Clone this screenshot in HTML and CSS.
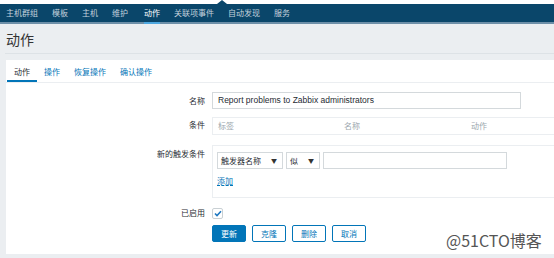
FILE: index.html
```html
<!DOCTYPE html>
<html>
<head>
<meta charset="utf-8">
<link rel="stylesheet" href="styles.css">
</head>
<body>
<div class="topstrip"><span class="notch"></span></div>
<nav class="nav">
  <a class="nav-item">主机群组</a>
  <a class="nav-item">模板</a>
  <a class="nav-item">主机</a>
  <a class="nav-item">维护</a>
  <a class="nav-item active">动作</a>
  <a class="nav-item">关联项事件</a>
  <a class="nav-item">自动发现</a>
  <a class="nav-item">服务</a>
</nav>
<header class="header"><h1 class="title">动作</h1></header>
<main class="panel">
  <div class="tabs">
    <span class="tab active">动作</span>
    <span class="tab">操作</span>
    <span class="tab">恢复操作</span>
    <span class="tab">确认操作</span>
  </div>
  <div class="form">
    <div class="row row-name">
      <label class="lbl">名称</label>
      <div class="field"><div class="input name-input">Report problems to Zabbix administrators</div></div>
    </div>
    <div class="row row-cond">
      <label class="lbl">条件</label>
      <div class="field">
        <div class="cond-box">
          <span class="th th1">标签</span>
          <span class="th th2">名称</span>
          <span class="th th3">动作</span>
        </div>
      </div>
    </div>
    <div class="row row-new">
      <label class="lbl">新的触发条件</label>
      <div class="field">
        <div class="new-box">
          <div class="controls">
            <div class="select sel1"><span>触发器名称</span><span class="arrow">▼</span></div>
            <div class="select sel2"><span>似</span><span class="arrow">▼</span></div>
            <div class="input val-input"></div>
          </div>
          <a class="add-link">添加</a>
        </div>
      </div>
    </div>
    <div class="row row-enabled">
      <label class="lbl">已启用</label>
      <div class="field">
        <span class="checkbox"><svg width="8" height="7" viewBox="0 0 8 7"><path d="M1 3.5 L3 5.5 L7 1.2" fill="none" stroke="#1f78c1" stroke-width="1.6"/></svg></span>
      </div>
    </div>
    <div class="row row-buttons">
      <span class="lbl"></span>
      <div class="field buttons">
        <button class="btn primary">更新</button>
        <button class="btn">克隆</button>
        <button class="btn">删除</button>
        <button class="btn">取消</button>
      </div>
    </div>
  </div>
  <div class="watermark">@51CTO博客</div>
</main>
</body>
</html>
```
FILE: styles.css
```css
* { box-sizing: border-box; }
html, body { margin: 0; padding: 0; }
body {
  width: 554px;
  height: 258px;
  overflow: hidden;
  background: #ebeef1;
  font-family: "Noto Sans CJK SC", "Liberation Sans", sans-serif;
  font-size: 8px;
  color: #1f2c33;
}
.topstrip {
  height: 4px;
  background: #ffffff;
  position: relative;
}
.notch {
  position: absolute;
  left: 217px;
  top: 0;
  width: 0; height: 0;
  border-left: 5px solid transparent;
  border-right: 5px solid transparent;
  border-bottom: 4px solid #0a466a;
}
.nav {
  height: 20px;
  background: #0a466a;
  border-bottom: 2px solid #6d8fa8;
  display: flex;
  align-items: center;
  padding-left: 6px;
}
.nav-item {
  color: #c3d1dc;
  font-size: 8px;
  line-height: 18px;
  height: 18px;
  margin-right: 14px;
  position: relative;
}
.nav-item.active {
  color: #ffffff;
  margin-left: 2px;
}
.nav-item.active::after {
  content: "";
  position: absolute;
  left: 0; right: 0; bottom: -2px;
  height: 2px;
  background: #4fa8e0;
}
.header {
  height: 30px;
  padding: 5px 0 0 1px;
  border-bottom: 1px solid #dde2e6;
  margin: 0 0 0 5px;
}
.title {
  margin: 0;
  font-size: 14px;
  font-weight: normal;
  color: #333333;
  line-height: 20px;
}
.panel {
  background: #ffffff;
  margin: 6px 0 0 6px;
  height: 194px;
  position: relative;
}
.tabs {
  display: flex;
  height: 23px;
  border-bottom: 1px solid #ebeef1;
  padding-left: 1px;
}
.tab {
  padding: 5px 7px 0 7px;
  color: #0275b8;
  font-size: 8px;
  line-height: 13px;
  position: relative;
}
.tab.active {
  color: #1f2c33;
  border-bottom: 2px solid #0275b8;
}
.form {
  padding-top: 9px;
}
.row {
  display: flex;
  align-items: flex-start;
}
.lbl {
  width: 206px;
  text-align: right;
  padding-right: 7px;
  font-size: 8px;
  color: #1f2c33;
  line-height: 17px;
  flex: none;
}
.field { flex: 1; }
.input {
  border: 1px solid #d4d9dc;
  background: #fff;
  height: 17px;
  font-size: 8.5px;
  line-height: 15px;
  padding-left: 5px;
  font-family: "Liberation Sans", "Noto Sans CJK SC", sans-serif;
  color: #1f2c33;
}
.name-input { width: 309px; }
.row-cond { margin-top: 8px; }
.cond-box {
  border: 1px solid #ebeef1;
  border-right: none;
  height: 18px;
  position: relative;
  color: #9ba7ae;
}
.th { position: absolute; top: 3px; line-height: 10px; }
.th1 { left: 5px; }
.th2 { left: 131px; }
.th3 { left: 258px; }
.row-cond .lbl { line-height: 15px; }
.row-new { margin-top: 10px; }
.row-new .lbl { line-height: 14px; padding-top: 2px; }
.new-box {
  border: 1px solid #ebeef1;
  border-right: none;
  height: 53px;
  padding: 6px 0 0 4px;
}
.controls { display: flex; gap: 3px; }
.select {
  border: 1px solid #d4d9dc;
  height: 17px;
  display: flex;
  justify-content: space-between;
  align-items: center;
  padding: 0 5px 0 3px;
  font-size: 8px;
  color: #1f2c33;
}
.arrow { font-size: 6px; color: #333; }
.sel1 { width: 66px; }
.sel2 { width: 34px; }
.val-input { width: 184px; }
.add-link {
  display: inline-block;
  margin-top: 6px;
  color: #0275b8;
  text-decoration: underline;
  text-decoration-style: dashed;
  font-size: 8px;
  line-height: 12px;
}
.row-enabled { margin-top: 9px; }
.row-enabled .lbl { line-height: 12px; }
.checkbox {
  display: inline-flex;
  align-items: center;
  justify-content: center;
  width: 11px;
  height: 11px;
  border: 1px solid #c9d0d4;
  border-radius: 2px;
  margin-top: 1px;
}
.row-buttons { margin-top: 6px; }
.buttons { display: flex; gap: 6px; }
.btn {
  height: 17px;
  width: 34px;
  padding: 0;
  font-family: "Noto Sans CJK SC", sans-serif;
  font-size: 8px;
  line-height: 15px;
  background: #fff;
  color: #0275b8;
  border: 1px solid #0275b8;
  border-radius: 2px;
}
.btn.primary { background: #0275b8; color: #fff; }
.watermark {
  position: absolute;
  left: 440px;
  top: 170px;
  font-family: "Noto Sans CJK SC", sans-serif;
  font-size: 16px;
  color: #555;
  line-height: 20px;
}
```
